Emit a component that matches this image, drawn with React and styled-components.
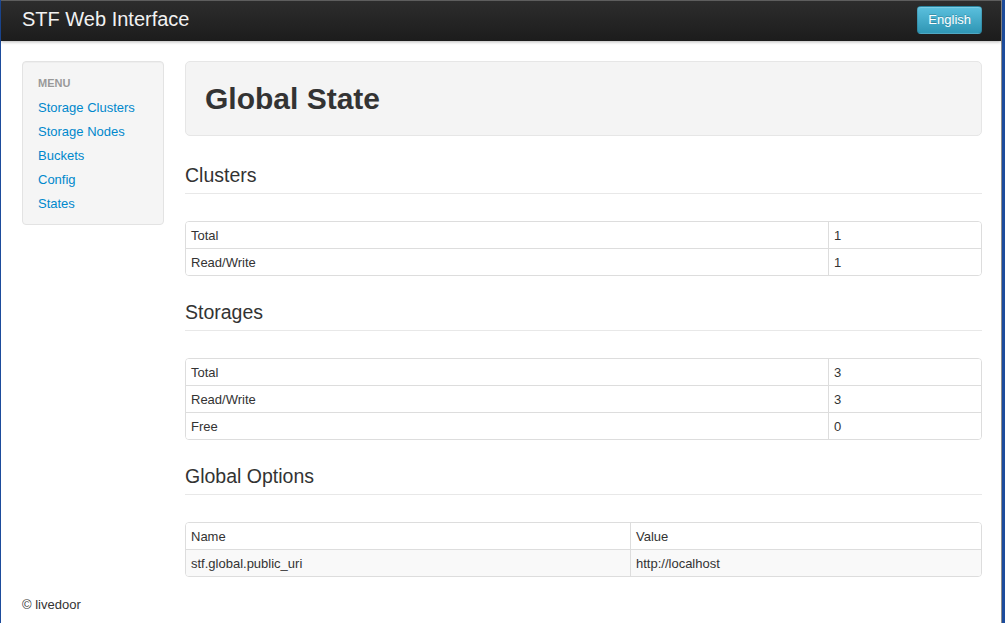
import React from "react";
import styled, { createGlobalStyle } from "styled-components";

const GlobalStyle = createGlobalStyle`
  html, body { margin: 0; padding: 0; background: #ffffff; }
  body {
    font-family: "Liberation Sans", Arial, Helvetica, sans-serif;
    font-size: 13px;
    line-height: 18px;
    color: #333333;
  }
  * { box-sizing: border-box; }
`;

const Frame = styled.div`
  min-height: 100vh;
  border-left: 1px solid #1d4c9c;
  border-right: 3px solid #1d4c9c;
  display: flex;
`;

const Window = styled.div`
  flex: 1;
  min-height: 100vh;
  border-right: 1px solid #8c8c8c;
  display: flex;
  flex-direction: column;
`;

const Navbar = styled.header`
  height: 41px;
  display: flex;
  align-items: flex-start;
  justify-content: space-between;
  padding: 0 19px 0 21px;
  border-top: 1px solid #5e5e5e;
  background: linear-gradient(to bottom, #2d2d2d, #1c1c1c);
  box-shadow: 0 1px 3px rgba(0, 0, 0, 0.28);
  position: relative;
  z-index: 1;
`;

const Brand = styled.a`
  padding-top: 8px;
  font-size: 20px;
  line-height: 20px;
  color: #f2f2f2;
  text-decoration: none;
`;

const Button = styled.button`
  margin-top: 5px;
  height: 28px;
  padding: 0 10px;
  font-family: inherit;
  font-size: 13px;
  line-height: 18px;
  color: #ffffff;
  text-shadow: 0 -1px 0 rgba(0, 0, 0, 0.2);
  background: linear-gradient(to bottom, #5bc0de, #2f96b4);
  border: 1px solid rgba(0, 0, 0, 0.12);
  border-radius: 4px;
  box-shadow: inset 0 1px 0 rgba(255, 255, 255, 0.2);
  cursor: pointer;
`;

const Container = styled.div`
  padding: 20px 19px 10px 21px;
`;

const Layout = styled.div`
  display: flex;
  align-items: flex-start;
  gap: 21px;
`;

const Sidebar = styled.nav`
  width: 142px;
  flex: none;
  padding: 8px 0;
  background: #f5f5f5;
  border: 1px solid #e3e3e3;
  border-radius: 4px;
  box-shadow: inset 0 1px 1px rgba(0, 0, 0, 0.03);
`;

const NavHeader = styled.div`
  padding: 4px 15px 4px;
  font-size: 11px;
  font-weight: bold;
  line-height: 18px;
  color: #999999;
  text-transform: uppercase;
  text-shadow: 0 1px 0 rgba(255, 255, 255, 0.5);
`;

const NavLink = styled.a`
  display: block;
  padding: 3px 15px;
  font-size: 13px;
  line-height: 18px;
  color: #0088cc;
  text-decoration: none;
`;

const Main = styled.main`
  flex: 1;
  min-width: 0;
`;

const Hero = styled.div`
  margin-bottom: 26px;
  padding: 0 19px;
  background: #f4f4f4;
  border: 1px solid #e6e6e6;
  border-radius: 5px;
`;

const Title = styled.h1`
  margin: 0;
  font-size: 30px;
  font-weight: bold;
  line-height: 73px;
  color: #333333;
`;

const SectionTitle = styled.h3`
  margin: 0 0 27px;
  padding-bottom: 4px;
  font-size: 19.5px;
  font-weight: normal;
  line-height: 27px;
  color: #333333;
  border-bottom: 1px solid #e8e8e8;
`;

const Table = styled.div`
  margin-bottom: ${(p) => (p.$last ? "0" : "23px")};
  border: 1px solid #dddddd;
  border-radius: 4px;
  overflow: hidden;
`;

const Row = styled.div`
  display: grid;
  grid-template-columns: 1fr ${(p) => p.$value}px;
  background: ${(p) => (p.$striped ? "#f9f9f9" : "#ffffff")};
  & + & {
    border-top: 1px solid #dddddd;
  }
`;

const Cell = styled.div`
  padding: 5px 5px 3px;
  font-size: 13px;
  line-height: 18px;
  color: #333333;
  white-space: nowrap;
  & + & {
    border-left: 1px solid #dddddd;
  }
`;

const Footer = styled.footer`
  margin-top: 19px;
  font-size: 13px;
  line-height: 18px;
  color: #333333;
`;

const menu = ["Storage Clusters", "Storage Nodes", "Buckets", "Config", "States"];

const sections = [
  {
    title: "Clusters",
    value: 153,
    rows: [
      ["Total", "1"],
      ["Read/Write", "1"],
    ],
  },
  {
    title: "Storages",
    value: 153,
    rows: [
      ["Total", "3"],
      ["Read/Write", "3"],
      ["Free", "0"],
    ],
  },
  {
    title: "Global Options",
    value: 351,
    striped: [1],
    rows: [
      ["Name", "Value"],
      ["stf.global.public_uri", "http://localhost"],
    ],
  },
];

export default function App() {
  return (
    <>
      <GlobalStyle />
      <Frame>
        <Window>
          <Navbar>
            <Brand href="#">STF Web Interface</Brand>
            <Button type="button">English</Button>
          </Navbar>
          <Container>
            <Layout>
              <Sidebar>
                <NavHeader>Menu</NavHeader>
                {menu.map((m) => (
                  <NavLink key={m} href="#">
                    {m}
                  </NavLink>
                ))}
              </Sidebar>
              <Main>
                <Hero>
                  <Title>Global State</Title>
                </Hero>
                {sections.map((s, si) => (
                  <section key={s.title}>
                    <SectionTitle>{s.title}</SectionTitle>
                    <Table $last={si === sections.length - 1}>
                      {s.rows.map((r, ri) => (
                        <Row
                          key={ri}
                          $value={s.value}
                          $striped={s.striped && s.striped.includes(ri)}
                        >
                          <Cell>{r[0]}</Cell>
                          <Cell>{r[1]}</Cell>
                        </Row>
                      ))}
                    </Table>
                  </section>
                ))}
              </Main>
            </Layout>
            <Footer>© livedoor</Footer>
          </Container>
        </Window>
      </Frame>
    </>
  );
}
